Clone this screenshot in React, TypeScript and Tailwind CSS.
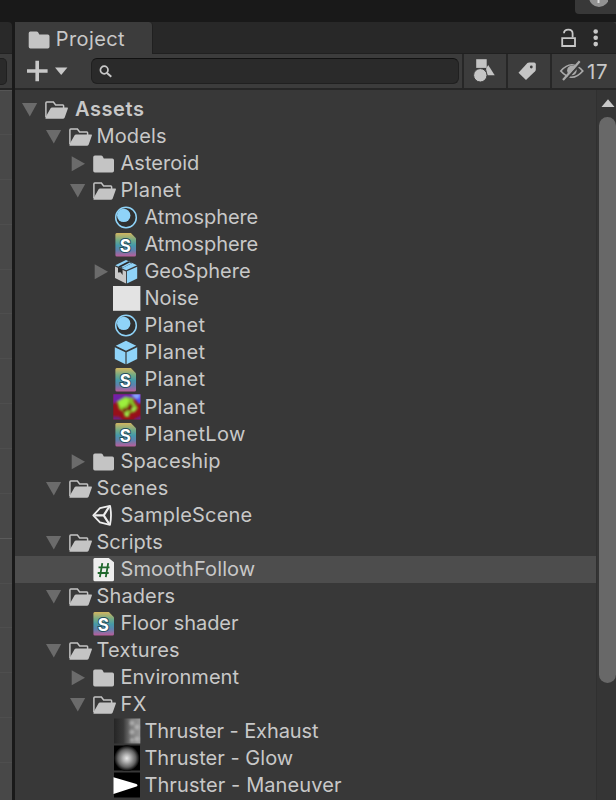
import React from "react";

type Kind =
  | "open" | "folder" | "material" | "shader" | "model" | "noise" | "mesh"
  | "planet" | "scene" | "script" | "exhaust" | "glow" | "maneuver";

interface Item {
  name: string;
  level: 0 | 1 | 2 | 3;
  kind: Kind;
  tracking: string;
  arrow?: "down" | "right";
  selected?: boolean;
}

const wide = "tracking-[0.35px]";
const normal = "tracking-[0.12px]";
const snug = "tracking-[0.03px]";
const tight = "tracking-[-0.08px]";

const items: Item[] = [
  { name: "Assets", level: 0, kind: "open", arrow: "down", tracking: "tracking-[0.6px]" },
  { name: "Models", level: 1, kind: "open", arrow: "down", tracking: normal },
  { name: "Asteroid", level: 2, kind: "folder", arrow: "right", tracking: snug },
  { name: "Planet", level: 2, kind: "open", arrow: "down", tracking: wide },
  { name: "Atmosphere", level: 3, kind: "material", tracking: tight },
  { name: "Atmosphere", level: 3, kind: "shader", tracking: tight },
  { name: "GeoSphere", level: 3, kind: "model", arrow: "right", tracking: snug },
  { name: "Noise", level: 3, kind: "noise", tracking: normal },
  { name: "Planet", level: 3, kind: "material", tracking: wide },
  { name: "Planet", level: 3, kind: "mesh", tracking: wide },
  { name: "Planet", level: 3, kind: "shader", tracking: wide },
  { name: "Planet", level: 3, kind: "planet", tracking: wide },
  { name: "PlanetLow", level: 3, kind: "shader", tracking: wide },
  { name: "Spaceship", level: 2, kind: "folder", arrow: "right", tracking: normal },
  { name: "Scenes", level: 1, kind: "open", arrow: "down", tracking: wide },
  { name: "SampleScene", level: 2, kind: "scene", tracking: "tracking-[0.2px]" },
  { name: "Scripts", level: 1, kind: "open", arrow: "down", tracking: snug },
  { name: "SmoothFollow", level: 2, kind: "script", selected: true, tracking: normal },
  { name: "Shaders", level: 1, kind: "open", arrow: "down", tracking: normal },
  { name: "Floor shader", level: 2, kind: "shader", tracking: tight },
  { name: "Textures", level: 1, kind: "open", arrow: "down", tracking: "tracking-[0.2px]" },
  { name: "Environment", level: 2, kind: "folder", arrow: "right", tracking: snug },
  { name: "FX", level: 2, kind: "open", arrow: "down", tracking: wide },
  { name: "Thruster - Exhaust", level: 3, kind: "exhaust", tracking: tight },
  { name: "Thruster - Glow", level: 3, kind: "glow", tracking: snug },
  { name: "Thruster - Maneuver", level: 3, kind: "maneuver", tracking: "tracking-[0.1px]" },
];

const indent = ["pl-[4px]", "pl-[28px]", "pl-[51.5px]", "pl-[74.5px]"];

function Folder() {
  return <path d="M3.2 7.2q0-1.7 1.7-1.7h6.2q1 0 1.5.8l1.2 2.2h8.5q1.7 0 1.7 1.7v10.6q0 1.7-1.7 1.7H4.9q-1.7 0-1.7-1.7z" fill="#c4c4c4" />;
}

function Glyph({ kind, id }: { kind: Kind; id: string }) {
  switch (kind) {
    case "folder":
      return <Folder />;
    case "open":
      return (
        <>
          <path d="M3.9 21V6.9q0-.9.9-.9h6.6l2.2 2.9h7.2q.8 0 .8.8v2.5" fill="none" stroke="#c4c4c4" strokeWidth="1.5" />
          <path d="M8.6 12.3q.5-.9 1.4-.9h15.1q1.3 0 .8 1.2l-3.2 8.8q-.5 1.4-1.8 1.4H3.5v-1.5z" fill="#c4c4c4" />
        </>
      );
    case "material":
      return (
        <>
          <circle cx="14" cy="13.5" r="10.3" fill="#303030" stroke="#8fd3f8" strokeWidth="1.5" />
          <circle cx="11.7" cy="11.4" r="6.7" fill="#8fd3f8" />
        </>
      );
    case "shader":
      return (
        <>
          <defs>
            <linearGradient id={id} x1="0" y1="0" x2="0" y2="1">
              <stop offset="0" stopColor="#d2b560" />
              <stop offset=".3" stopColor="#72aa86" />
              <stop offset=".52" stopColor="#459aaa" />
              <stop offset=".72" stopColor="#5c83ae" />
              <stop offset="1" stopColor="#bd5c9b" />
            </linearGradient>
          </defs>
          <path d="M4.7 2h14.2l5.1 5.3v16.6q0 1.7-1.5 1.7H4.9q-1.5 0-1.5-1.7V3.5Q3.4 2 4.7 2z" fill={"url(#" + id + ")"} />
          <text x="13.4" y="20.6" textAnchor="middle" fontSize="17" fontWeight="700" letterSpacing="0" fill="#fff" stroke="#254f5f" strokeWidth="1.8" paintOrder="stroke">S</text>
        </>
      );
    case "model":
      return (
        <>
          <path d="m3 8.6 11 5v11.8L3 20z" fill="#c8c8c8" />
          <path d="m14.9 13.3 10.3-4.6v11.7l-10.3 5z" fill="#8fd3f8" />
          <path d="M3.3 7.2 14 2.1l11 5.2-10.8 4.9z" fill="#8fd3f8" />
          <path d="m6.1 8.6 10.3-5.4 3.9 1.8-10.4 5.3z" fill="#2b2b2b" />
          <path d="m9.1 8.9 8.6-4.4 1.8.8-8.8 4.4z" fill="#8fd3f8" />
          <path d="m6 9.2 4.6 2.2v5.7l-2.1-2.8L6 14.4z" fill="#2b2b2b" />
        </>
      );
    case "mesh":
      return (
        <>
          <path d="m14 1.7 10.2 5.1L14 11.7 3.8 6.8z" fill="#8fd3f8" />
          <path d="m2.8 8.2 10.6 5v12L2.8 19.9zM25.2 8.2l-10.6 5v12l10.6-5.3z" fill="#8fd3f8" />
        </>
      );
    case "scene":
      return (
        <g fill="none" stroke="#eee" strokeWidth="2.2" strokeLinejoin="round">
          <path d="M3.3 13.3 10 6.2l10-2.4q2 9.5 0 19l-10-2.4z" strokeWidth="1.8" />
          <path d="M4.5 13.3h9.2M13.7 13.3 19.3 4.5M13.7 13.3l5.6 8.8" />
        </g>
      );
    case "script":
      return (
        <>
          <path d="M4.7 2h14l5.3 4.3v17.4q0 1.6-1.5 1.6H4.9q-1.5 0-1.5-1.6V3.5Q3.4 2 4.7 2z" fill="#eee" />
          <path d="m12.3 7.1-2.4 14M18.2 7.1l-2.4 14M8.5 11.3h11M7.7 17h11" stroke="#20682d" strokeWidth="1.8" />
        </>
      );
    case "noise":
      return (
        <>
          <path d="M1 1h27.5v25H1z" fill="#b8b8b8" />
          <path d="M1 1h27v24.2H1z" fill="#e3e3e3" />
        </>
      );
    case "planet":
      return (
        <>
          <defs>
            <filter id={id} x="-.1" y="-.1" width="1.2" height="1.2"><feGaussianBlur stdDeviation=".9" /></filter>
            <clipPath id={id + "c"}><path d="M1.3 .2h27.2v25.4H1.3z" /></clipPath>
          </defs>
          <g clipPath={"url(#" + id + "c)"}>
            <path d="M0 0h30v27H0z" fill="#981019" />
            <g filter={"url(#" + id + ")"}>
              <path d="M0-2h30v5L17 4 4 8l-4 3z" fill="#7020a8" />
              <path d="M17-2h14v10l-4 2-5-6z" fill="#5048f2" />
              <path d="m20 0 8-1-1 5-4 1z" fill="#86a6ff" />
              <path d="M0 22l8 1 4 5H0zM22 25l8-4v6h-8z" fill="#6a2480" />
              <path d="m5 8 8-5 8 1 1 4 4 6-3 4-5 1-1 4h-4l-2-5-4-3z" fill="#84bd26" />
              <path d="m10 15 5-1 3-5 4 5-3 3-4-1-3 3z" fill="#781b12" />
              <path d="m6 8 7-4 4 1-2 6-6 3z" fill="#9cf03c" />
              <path d="m21 13 3 1-2 3-3-1zM13 19l3-1v4h-2z" fill="#a6e856" />
            </g>
          </g>
        </>
      );
    case "exhaust":
      return (
        <>
          <defs>
            <linearGradient id={id}>
              <stop offset="0" stopColor="#252525" />
              <stop offset=".35" stopColor="#383838" />
              <stop offset=".65" stopColor="#7c7c7c" />
              <stop offset="1" stopColor="#999" />
            </linearGradient>
            <filter id={id + "b"}><feGaussianBlur stdDeviation="1.2" /></filter>
          </defs>
          <path d="M2 .5h26.3v25H2z" fill={"url(#" + id + ")"} />
          <g fill="#ccc" opacity=".55" filter={"url(#" + id + "b)"}>
            <circle cx="20" cy="5" r="2.5" /><circle cx="25" cy="9" r="2.5" />
            <circle cx="20" cy="14" r="2.5" /><circle cx="25" cy="21" r="2.5" /><circle cx="20" cy="22" r="2" />
          </g>
        </>
      );
    case "glow":
      return (
        <>
          <defs>
            <radialGradient id={id}>
              <stop offset="0" stopColor="#e8e8e8" />
              <stop offset=".3" stopColor="#b3b3b3" />
              <stop offset=".7" stopColor="#616161" />
              <stop offset="1" stopColor="#000" />
            </radialGradient>
          </defs>
          <path d="M2 .5h26v25H2z" fill="#000" />
          <circle cx="14.8" cy="13.3" r="12.8" fill={"url(#" + id + ")"} />
        </>
      );
    case "maneuver":
      return (
        <>
          <path d="M2 .5h26v25H2z" fill="#000" />
          <path d="M1.5 5.3 24.5 12q2 1.4 0 2.6L1.5 22z" fill="#fff" />
        </>
      );
  }
}

function Row({ item, index }: { item: Item; index: number }) {
  return (
    <div className={"flex h-[27.06px] shrink-0 items-center " + indent[item.level] + (item.selected ? " bg-[#4d4d4d]" : "")}>
      <svg className="h-[27px] w-[23px] shrink-0" viewBox="0 0 23 27">
        {item.arrow === "down" && <path d="M3 7h15.2l-7.4 13.5z" fill="#6b6b6b" />}
        {item.arrow === "right" && <path d="M4.7 6.2v15l13.3-7.5z" fill="#6b6b6b" />}
      </svg>
      <svg className={"h-[27px] w-[29px] shrink-0" + (item.level === 3 ? " -ml-[0.5px]" : item.level === 0 ? " ml-[0.3px]" : "")} viewBox="0 0 29 27">
        <Glyph kind={item.kind} id={"glyph" + index} />
      </svg>
      <span className={"whitespace-nowrap " + item.tracking + (item.level === 0 ? " pl-[3.6px] font-semibold" : item.level === 3 ? " pl-[3.4px]" : item.level === 2 ? " pl-[2px]" : " pl-[1.5px]")}>{item.name}</span>
    </div>
  );
}

export default function App() {
  return (
    <div className="flex h-[800px] w-[616px] flex-col overflow-hidden bg-[#191919] font-['Inter',sans-serif] text-[20px] leading-[27px] tracking-[0.4px] text-[#c8c8c8]">
      <div className="flex h-[22px] shrink-0 justify-end">
        <div className="flex h-[14px] w-[41px] justify-center overflow-hidden rounded-bl-[4px] bg-[#383838]">
          <svg className="h-[14px] w-[24px]" viewBox="0 0 24 14">
            <circle cx="15" cy="-3" r="10" fill="#929292" />
            <path d="M14.5 0v3" stroke="#ddd" strokeWidth="2" />
          </svg>
        </div>
      </div>
      <div className="flex min-h-0 flex-1">
        <aside className="flex w-[12px] shrink-0 flex-col overflow-hidden">
          <div className="h-[31px] shrink-0 rounded-tr-[4px] bg-[#292929]" />
          <div className="flex h-[35px] shrink-0 items-center border-t border-[#222] bg-[#3c3c3c]">
            <div className="h-[27px] w-[7px] rounded-r-[5px] border border-l-0 border-[#202020] bg-[#2a2a2a]" />
          </div>
          <div className="h-[1.5px] shrink-0 bg-[#242424]" />
          <div className="flex flex-1 flex-col bg-[#484848]">
            <div className="h-[44.5px] shrink-0 border-t border-[#555]" />
            {Array.from({ length: 15 }, (_, n) => (
              <div key={n} className={"h-[44.87px] shrink-0 border-t " + (n === 9 ? "border-[#5b5b5b]" : "border-[#4e4e4e]")} />
            ))}
          </div>
        </aside>
        <div className="w-[3px] shrink-0 bg-[#191919]" />
        <main className="flex min-w-0 flex-1 flex-col bg-[#383838]">
          <header className="flex h-[32px] shrink-0 rounded-tr-[4px] bg-[#282828]">
            <div className="flex w-[138px] items-center rounded-tr-[4px] border-r border-[#202020] bg-[#3c3c3c] pl-[10px] pt-[2px]">
              <svg className="h-[27px] w-[30px]" viewBox="0 0 29 27"><Folder /></svg>
              <span className="pl-[0.8px]">Project</span>
            </div>
            <div className="flex flex-1 items-center justify-end border-b border-[#202020] pr-[11px]">
              <svg className="h-[30px] w-[50px]" viewBox="0 0 50 30" fill="none">
                <path d="M7.2 15.2h12.8v7.8H7.2z" stroke="#c8c8c8" strokeWidth="1.8" />
                <path d="M9 10.2q0-3.6 4.3-3.6t4.3 4v4" stroke="#c8c8c8" strokeWidth="1.8" />
                <g fill="#c8c8c8"><circle cx="40.7" cy="8.5" r="2.3" /><circle cx="40.7" cy="14.8" r="2.3" /><circle cx="40.7" cy="21.1" r="2.3" /></g>
              </svg>
            </div>
          </header>
          <div className="flex h-[36px] shrink-0 items-stretch border-b-2 border-[#262626] bg-[#3c3c3c]">
            <svg className="h-[34px] w-[76px] shrink-0" viewBox="0 0 76 34">
              <path d="M12 17h20.6M22.2 6.8v20.4" stroke="#c8c8c8" strokeWidth="3.6" />
              <path d="M40 13.5h12.4L46.2 21z" fill="#c8c8c8" />
            </svg>
            <div className="my-[4px] flex w-[368px] items-center rounded-[6px] border border-[#202020] border-t-[#111] bg-[#2a2a2a] pl-[7px]">
              <svg className="mt-[2px] h-[14px] w-[14px]" viewBox="0 0 14 14" fill="none" stroke="#c8c8c8">
                <circle cx="5.2" cy="5" r="3.8" strokeWidth="1.7" /><path d="m8 8 4.3 3.8" strokeWidth="2" />
              </svg>
            </div>
            <div className="ml-[3px] flex w-[44px] items-center justify-center border-l-2 border-[#272727]">
              <svg className="h-[26px] w-[26px]" viewBox="0 0 26 26" fill="#c4c4c4">
                <path d="M4.2 1.2h10.5v8.7H4.2z" /><path d="m16.2 7 6.5 10.2h-7.3l-1.4-6.5z" />
                <circle cx="8.3" cy="17.3" r="6.7" stroke="#3c3c3c" />
              </svg>
            </div>
            <div className="flex w-[44px] items-center justify-center border-l-2 border-[#272727]">
              <svg className="h-[24px] w-[24px]" viewBox="0 0 24 24">
                <path d="m1.5 13.8 8.9-9.7q.7-.7 1.8-.7h4.9q1.7 0 1.7 1.8v5.5q0 .9-.7 1.6l-9.1 8.6z" fill="#c4c4c4" />
                <circle cx="14.3" cy="8" r="1.4" fill="#3c3c3c" />
              </svg>
            </div>
            <div className="flex flex-1 items-center border-l-2 border-[#272727] pl-[6px]">
              <svg className="h-[28px] w-[28px] shrink-0" viewBox="0 0 28 28" fill="none" stroke="#aaa" strokeWidth="1.7">
                <path d="M2.8 14q11-12.5 22 0-11 12.5-22 0z" />
                <circle cx="13.9" cy="13.5" r="4.8" fill="#aaa" stroke="none" />
                <path d="M6.8 24 23.4 5.5" stroke="#3c3c3c" strokeWidth="2.2" />
                <path d="M5 23 21.7 4.3" strokeWidth="2.2" />
              </svg>
              <span className="ml-[1px] text-[20.5px] tracking-[0.6px]">17</span>
            </div>
          </div>
          <div className="flex min-h-0 flex-1">
            <section className="flex min-w-0 flex-1 flex-col overflow-hidden pt-[6px]">
              {items.map((item, index) => <Row key={index} item={item} index={index} />)}
            </section>
            <div className="flex w-[20px] shrink-0 flex-col items-end overflow-hidden border-l border-[#303030] bg-[#353535] pt-[8px]">
              <svg className="h-[19px] w-[18px] shrink-0" viewBox="0 0 18 19"><path d="M3.5 9h13L10 1.3z" fill="#c8c8c8" /></svg>
              <div className="h-[566px] w-[17px] shrink-0 rounded-full bg-[#686868]" />
            </div>
          </div>
        </main>
      </div>
    </div>
  );
}
